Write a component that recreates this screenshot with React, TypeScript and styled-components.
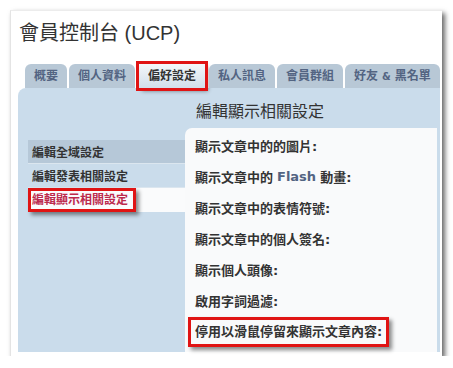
import * as React from "react";
import styled, { createGlobalStyle } from "styled-components";

const GlobalStyle = createGlobalStyle`
  body {
    margin: 0;
    background: #fff;
    font-family: "DejaVu Sans", "Noto Sans CJK TC", sans-serif;
  }
`;

const Card = styled.div`
  box-sizing: border-box;
  width: 432px;
  height: 346px;
  margin: 10px 0 0 10px;
  background: #fff;
  border-top: 1px solid #ececec;
  border-left: 1px solid #e4e4e4;
  box-shadow: 3px 3px 5px rgba(0, 0, 0, 0.6);
  display: flex;
  flex-direction: column;
  padding: 0 1px 4px 7px;
  overflow: hidden;
`;

const Title = styled.h1`
  margin: 9px 0 0 1px;
  height: 44px;
  font-family: "Liberation Sans", "Noto Sans CJK TC", sans-serif;
  font-size: 20px;
  font-weight: normal;
  color: #333;
  line-height: 26px;
`;

const Tabs = styled.ul`
  display: flex;
  gap: 2px;
  margin: 0;
  padding: 0 0 0 7px;
  list-style: none;
  height: 24px;
  white-space: nowrap;
  position: relative;
  z-index: 1;
`;

const Tab = styled.li<{ $active?: boolean }>`
  flex: none;
  height: 24px;
  padding: 0 9px;
  margin: ${(p) => (p.$active ? "0 2px" : "0")};
  border-radius: ${(p) => (p.$active ? "0" : "6px 6px 0 0")};
  background: ${(p) =>
    p.$active ? "linear-gradient(#f4f7fa, #d2dfea)" : "#b8c8d6"};
  color: ${(p) => (p.$active ? "#333" : "#536482")};
  font-size: 12px;
  font-weight: bold;
  line-height: 24px;
  outline: ${(p) => (p.$active ? "3px solid #e01414" : "none")};
  box-shadow: ${(p) => (p.$active ? "3px 3px 4px rgba(0,0,0,0.45)" : "none")};
`;

const Amp = styled.span`
  font-size: 10px;
  margin: 0 4px;
`;

const Panel = styled.div`
  flex: 1;
  margin-right: 1px;
  background: #cadceb;
  border-radius: 8px 0 0 0;
  display: grid;
  grid-template-columns: 167px 1fr;
  padding-right: 3px;
`;

const Nav = styled.ul`
  margin: 52px 0 0 10px;
  padding: 0;
  list-style: none;
`;

const NavItem = styled.li<{ $active?: boolean; $hover?: boolean }>`
  height: 23px;
  display: flex;
  align-items: center;
  padding-left: 4px;
  font-size: 12px;
  font-weight: bold;
  color: ${(p) => (p.$active ? "#bc2a4d" : "#333")};
  background: ${(p) =>
    p.$active ? "#fafbfc" : p.$hover ? "#b6c8d8" : "transparent"};
  border-bottom: 1px solid ${(p) => (p.$active ? "transparent" : "#dbe6ef")};
`;

const Marked = styled.span`
  display: inline-block;
  padding: 1px 5px 1px 1px;
  margin-left: -4px;
  border: 3px solid #e01414;
  box-shadow: 3px 3px 4px rgba(0, 0, 0, 0.45);
  line-height: 16px;
`;

const Main = styled.div`
  display: flex;
  flex-direction: column;
`;

const Heading = styled.h2`
  margin: 0;
  height: 40px;
  padding-left: 11px;
  font-size: 16px;
  font-weight: normal;
  color: #333;
  line-height: 44px;
  font-family: "Noto Sans CJK TC", sans-serif;
`;

const Content = styled.div`
  flex: 1;
  background: #f9fafb;
  border-radius: 7px 0 0 0;
  padding: 2px 0 0 10px;
`;

const Field = styled.div`
  height: 31px;
  display: flex;
  align-items: center;
  font-size: 13px;
  font-weight: bold;
  color: #333;
`;

const FieldMark = styled.span`
  display: inline-block;
  margin-left: -7px;
  padding: 3px 4px;
  border: 3px solid #e01414;
  box-shadow: 3px 3px 4px rgba(0, 0, 0, 0.45);
  line-height: 18px;
`;

const Flash = styled.span`
  color: #536482;
  margin: 0 4px;
`;

const App = () => {
  return (
    <>
      <GlobalStyle />
      <Card>
        <Title>會員控制台 (UCP)</Title>
        <Tabs>
          <Tab>概要</Tab>
          <Tab>個人資料</Tab>
          <Tab $active>偏好設定</Tab>
          <Tab>私人訊息</Tab>
          <Tab>會員群組</Tab>
          <Tab>
            好友<Amp>&amp;</Amp>黑名單
          </Tab>
        </Tabs>
        <Panel>
          <Nav>
            <NavItem $hover>編輯全域設定</NavItem>
            <NavItem>編輯發表相關設定</NavItem>
            <NavItem $active>
              <Marked>編輯顯示相關設定</Marked>
            </NavItem>
          </Nav>
          <Main>
            <Heading>編輯顯示相關設定</Heading>
            <Content>
              <Field>顯示文章中的的圖片:</Field>
              <Field>
                顯示文章中的<Flash>Flash</Flash>動畫:
              </Field>
              <Field>顯示文章中的表情符號:</Field>
              <Field>顯示文章中的個人簽名:</Field>
              <Field>顯示個人頭像:</Field>
              <Field>啟用字詞過濾:</Field>
              <Field>
                <FieldMark>停用以滑鼠停留來顯示文章內容:</FieldMark>
              </Field>
            </Content>
          </Main>
        </Panel>
      </Card>
    </>
  );
};

export default App;
